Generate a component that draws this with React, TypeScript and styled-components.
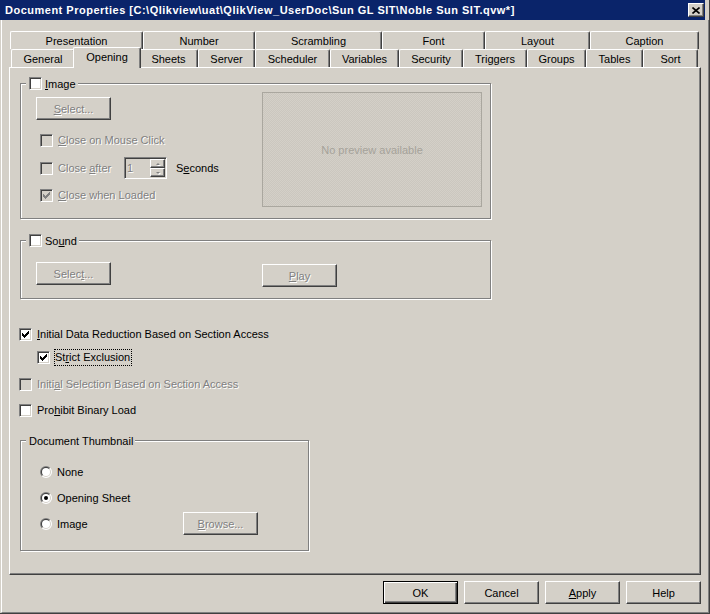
import React from 'react';
import styled, { createGlobalStyle, css } from 'styled-components';

const FACE = '#d4d0c8';
const SHADOW = '#808080';
const DARK = '#404040';

const TITLE =
  'Document Properties [C:\\Qlikview\\uat\\QlikView_UserDoc\\Sun GL SIT\\Noble Sun SIT.qvw*]';

const BACK_TABS: [string, number][] = [
  ['Presentation', 133],
  ['Number', 112],
  ['Scrambling', 127],
  ['Font', 103],
  ['Layout', 105],
  ['Caption', 109],
];

const FRONT_TABS: [string, number][] = [
  ['General', 64],
  ['Opening', 64],
  ['Sheets', 59],
  ['Server', 57],
  ['Scheduler', 75],
  ['Variables', 69],
  ['Security', 64],
  ['Triggers', 64],
  ['Groups', 59],
  ['Tables', 57],
  ['Sort', 55],
];

const GlobalStyle = createGlobalStyle`
  html, body {
    margin: 0;
    padding: 0;
    background: ${FACE};
  }
  body {
    font-family: "Liberation Sans", Arial, sans-serif;
    font-size: 11px;
    color: #000;
  }
  * {
    box-sizing: border-box;
  }
`;

const Window = styled.div`
  width: 710px;
  height: 614px;
  background: ${FACE};
  border-right: 1px solid ${DARK};
  border-bottom: 1px solid ${DARK};
  display: flex;
  flex-direction: column;
`;

const TitleBar = styled.div`
  height: 20px;
  flex-shrink: 0;
  margin-right: 4px;
  padding: 0 1px 0 5px;
  background: #0a246a;
  color: #fff;
  font-weight: bold;
  letter-spacing: 0.5px;
  display: flex;
  align-items: center;
`;

const TitleText = styled.span`
  flex: 1;
  white-space: nowrap;
  overflow: hidden;
`;

const CloseBox = styled.div`
  width: 16px;
  height: 14px;
  background: ${FACE};
  border: 1px solid;
  border-color: #fff ${DARK} ${DARK} #fff;
  box-shadow: inset -1px -1px 0 ${SHADOW};
  display: flex;
  align-items: center;
  justify-content: center;
`;

const Body = styled.div`
  flex: 1;
  margin-left: 1px;
  border-left: 1px solid #fff;
  border-right: 1px solid ${SHADOW};
  border-bottom: 1px solid ${SHADOW};
  padding: 11px 7px 0 7px;
  display: flex;
  flex-direction: column;
`;

const TabRow = styled.div<{ $indent: number }>`
  display: flex;
  height: 18px;
  margin-left: ${(p) => p.$indent}px;
`;

const Tab = styled.div<{ $w: number; $active?: boolean }>`
  width: ${(p) => p.$w}px;
  height: 18px;
  flex-shrink: 0;
  background: ${FACE};
  border-top: 1px solid #fff;
  border-left: 1px solid #fff;
  border-right: 1px solid ${DARK};
  border-radius: 2px 2px 0 0;
  box-shadow: inset -1px 0 0 ${SHADOW};
  display: flex;
  align-items: center;
  justify-content: center;
  white-space: nowrap;

  ${(p) =>
    p.$active &&
    css`
      width: ${p.$w + 4}px;
      height: 21px;
      margin: -2px -2px 0;
      padding-bottom: 3px;
      position: relative;
      z-index: 1;
    `}
`;

const Panel = styled.div`
  height: 508px;
  flex-shrink: 0;
  border: 1px solid;
  border-color: #fff ${DARK} ${DARK} #fff;
  box-shadow: inset -1px -1px 0 ${SHADOW};
  padding: 15px 0 0 9px;
  display: flex;
  flex-direction: column;
  align-items: flex-start;
`;

const GroupBox = styled.div<{ $w: number; $h: number; $mt?: number }>`
  position: relative;
  width: ${(p) => p.$w}px;
  height: ${(p) => p.$h}px;
  margin: ${(p) => p.$mt ?? 0}px 0 0 1px;
  border: 1px solid ${SHADOW};
  box-shadow: inset 1px 1px 0 #fff, 1px 1px 0 #fff;
  display: flex;
`;

const GroupTitle = styled.div`
  position: absolute;
  top: -7px;
  left: 5px;
  height: 13px;
  padding: 0 2px 0 3px;
  background: ${FACE};
  display: flex;
  align-items: center;
  gap: 3px;
  white-space: nowrap;
`;

const ImageInner = styled.div`
  display: flex;
  align-items: flex-start;
  padding: 8px 0 0 15px;
`;

const LeftCol = styled.div`
  width: 226px;
  padding-top: 5px;
  display: flex;
  flex-direction: column;
`;

const Preview = styled.div`
  width: 220px;
  height: 115px;
  border: 1px solid #aaa79f;
  background-color: ${FACE};
  background-image: repeating-conic-gradient(#cbc7bf 0 25%, ${FACE} 0 50%);
  background-size: 2px 2px;
  color: #a5a29a;
  display: flex;
  align-items: center;
  justify-content: center;
`;

const SoundInner = styled.div`
  display: flex;
  align-items: flex-start;
  padding: 21px 0 0 15px;
`;

const ThumbInner = styled.div`
  display: flex;
  flex-direction: column;
  padding: 22px 0 0 19px;
`;

const OptionRow = styled.div<{ $mt?: number; $ml?: number; $h?: number }>`
  display: flex;
  align-items: center;
  height: ${(p) => p.$h ?? 18}px;
  margin-top: ${(p) => p.$mt ?? 0}px;
  margin-left: ${(p) => p.$ml ?? 0}px;
`;

const disabledText = css`
  color: ${SHADOW};
  text-shadow: 1px 1px 0 #fff;
`;

const Label = styled.span<{ $disabled?: boolean; $w?: number; $ml?: number }>`
  margin-left: ${(p) => p.$ml ?? 5}px;
  white-space: nowrap;
  ${(p) => p.$w && `width: ${p.$w}px;`}
  ${(p) => p.$disabled && disabledText}
`;

const FocusLabel = styled.span`
  margin-left: 4px;
  height: 17px;
  line-height: 15px;
  padding-right: 1px;
  border: 1px dotted #000;
  white-space: nowrap;
`;

const Box = styled.span<{ $disabled?: boolean }>`
  width: 13px;
  height: 13px;
  flex-shrink: 0;
  display: inline-flex;
  align-items: center;
  justify-content: center;
  background: ${(p) => (p.$disabled ? FACE : '#fff')};
  border: 1px solid;
  border-color: ${SHADOW} #fff #fff ${SHADOW};
  box-shadow: inset 1px 1px 0 ${DARK}, inset -1px -1px 0 ${FACE};
`;

const Button = styled.button<{ $default?: boolean; $mt?: number; $ml?: number }>`
  width: 75px;
  height: 23px;
  flex-shrink: 0;
  margin: ${(p) => p.$mt ?? 0}px 0 0 ${(p) => p.$ml ?? 0}px;
  padding: 0;
  font: inherit;
  color: #000;
  background: ${FACE};
  border: 1px solid;
  border-color: #fff ${DARK} ${DARK} #fff;
  box-shadow: inset -1px -1px 0 ${SHADOW}, inset 1px 1px 0 ${FACE};

  &:disabled {
    ${disabledText}
  }

  ${(p) =>
    p.$default &&
    css`
      border-color: #000;
      box-shadow: inset 1px 1px 0 #fff, inset -1px -1px 0 ${DARK}, inset -2px -2px 0 ${SHADOW};
    `}
`;

const Spinner = styled.div`
  width: 43px;
  height: 22px;
  flex-shrink: 0;
  display: flex;
  background: ${FACE};
  border: 1px solid;
  border-color: ${SHADOW} #fff #fff ${SHADOW};
  box-shadow: inset 1px 1px 0 ${DARK}, inset -1px -1px 0 ${FACE};
  padding: 1px 1px 1px 2px;
`;

const SpinValue = styled.span`
  flex: 1;
  line-height: 18px;
  ${disabledText}
`;

const SpinButtons = styled.div`
  width: 15px;
  display: flex;
  flex-direction: column;
`;

const SpinButton = styled.span<{ $down?: boolean }>`
  height: 9px;
  border: 1px solid;
  border-color: #fff ${DARK} ${DARK} #fff;
  box-shadow: inset -1px -1px 0 ${SHADOW};
  display: flex;
  align-items: center;
  justify-content: center;

  &::after {
    content: '';
    width: 0;
    height: 0;
    border-left: 2px solid transparent;
    border-right: 2px solid transparent;
    ${(p) =>
      p.$down
        ? `border-top: 2px solid ${SHADOW};`
        : `border-bottom: 2px solid ${SHADOW};`}
    filter: drop-shadow(1px 1px 0 #fff);
  }
`;

const ButtonBar = styled.div`
  display: flex;
  justify-content: flex-end;
  gap: 6px;
  margin-top: 6px;
`;

const CHECK_PIXELS: [number, number, number][] = [
  [0, 6, 6],
  [1, 5, 6],
  [2, 0, 0],
  [2, 4, 6],
  [3, 0, 1],
  [3, 3, 5],
  [4, 0, 4],
  [5, 1, 3],
  [6, 2, 2],
];

function CheckBox({ checked, disabled }: { checked?: boolean; disabled?: boolean }) {
  return (
    <Box $disabled={disabled}>
      {checked ? (
        <svg width="7" height="7" viewBox="0 0 7 7" shapeRendering="crispEdges">
          {CHECK_PIXELS.map(([y, x0, x1]) => (
            <rect
              key={`${y}-${x0}`}
              x={x0}
              y={y}
              width={x1 - x0 + 1}
              height={1}
              fill={disabled ? SHADOW : '#000'}
            />
          ))}
        </svg>
      ) : null}
    </Box>
  );
}

// half of a circle cut along the bottom-left / top-right diagonal
function half(r: number, topLeft: boolean) {
  const k = r * Math.SQRT1_2;
  const a = `${6 - k} ${6 + k}`;
  const b = `${6 + k} ${6 - k}`;
  return topLeft ? `M${a} A${r} ${r} 0 0 1 ${b} Z` : `M${b} A${r} ${r} 0 0 1 ${a} Z`;
}

function Radio({ checked }: { checked?: boolean }) {
  return (
    <svg width="12" height="12" viewBox="0 0 12 12" style={{ flexShrink: 0 }}>
      <path d={half(6, true)} fill={SHADOW} />
      <path d={half(6, false)} fill="#fff" />
      <path d={half(5, true)} fill={DARK} />
      <path d={half(5, false)} fill={FACE} />
      <circle cx="6" cy="6" r="4" fill="#fff" />
      {checked ? <circle cx="6" cy="6" r="2" fill="#000" /> : null}
    </svg>
  );
}

export default function App() {
  return (
    <>
      <GlobalStyle />
      <Window>
        <TitleBar>
          <TitleText>{TITLE}</TitleText>
          <CloseBox>
            <svg width="8" height="7" viewBox="0 0 8 7">
              <path d="M0.5 0.5 L7.5 6.5 M7.5 0.5 L0.5 6.5" stroke="#000" strokeWidth="1.6" />
            </svg>
          </CloseBox>
        </TitleBar>

        <Body>
          <TabRow $indent={1}>
            {BACK_TABS.map(([name, w]) => (
              <Tab key={name} $w={w}>
                {name}
              </Tab>
            ))}
          </TabRow>
          <TabRow $indent={2}>
            {FRONT_TABS.map(([name, w]) => (
              <Tab key={name} $w={w} $active={name === 'Opening'}>
                {name}
              </Tab>
            ))}
          </TabRow>

          <Panel>
            <GroupBox $w={471} $h={136}>
              <GroupTitle>
                <CheckBox />
                <span>
                  <u>I</u>mage
                </span>
              </GroupTitle>
              <ImageInner>
                <LeftCol>
                  <Button disabled>
                    <u>S</u>elect...
                  </Button>
                  <OptionRow $mt={11} $ml={4}>
                    <CheckBox disabled />
                    <Label $disabled>
                      <u>C</u>lose on Mouse Click
                    </Label>
                  </OptionRow>
                  <OptionRow $mt={8} $ml={4} $h={22}>
                    <CheckBox disabled />
                    <Label $disabled $w={66}>
                      Close <u>a</u>fter
                    </Label>
                    <Spinner>
                      <SpinValue>1</SpinValue>
                      <SpinButtons>
                        <SpinButton />
                        <SpinButton $down />
                      </SpinButtons>
                    </Spinner>
                    <Label $ml={9}>
                      S<u>e</u>conds
                    </Label>
                  </OptionRow>
                  <OptionRow $mt={7} $ml={4}>
                    <CheckBox disabled checked />
                    <Label $disabled>
                      <u>C</u>lose when Loaded
                    </Label>
                  </OptionRow>
                </LeftCol>
                <Preview>No preview available</Preview>
              </ImageInner>
            </GroupBox>

            <GroupBox $w={471} $h={59} $mt={21}>
              <GroupTitle>
                <CheckBox />
                <span>
                  So<u>u</u>nd
                </span>
              </GroupTitle>
              <SoundInner>
                <Button disabled>
                  Selec<u>t</u>...
                </Button>
                <Button disabled $ml={151} $mt={2}>
                  <u>P</u>lay
                </Button>
              </SoundInner>
            </GroupBox>

            <OptionRow $mt={26}>
              <CheckBox checked />
              <Label>
                <u>I</u>nitial Data Reduction Based on Section Access
              </Label>
            </OptionRow>
            <OptionRow $mt={5} $ml={18}>
              <CheckBox checked />
              <FocusLabel>
                St<u>r</u>ict Exclusion
              </FocusLabel>
            </OptionRow>
            <OptionRow $mt={9}>
              <CheckBox disabled />
              <Label $disabled>
                Initi<u>a</u>l Selection Based on Section Access
              </Label>
            </OptionRow>
            <OptionRow $mt={8}>
              <CheckBox />
              <Label>
                Pro<u>h</u>ibit Binary Load
              </Label>
            </OptionRow>

            <GroupBox $w={289} $h={111} $mt={21}>
              <GroupTitle>Document Thumbnail</GroupTitle>
              <ThumbInner>
                <OptionRow>
                  <Radio />
                  <Label>None</Label>
                </OptionRow>
                <OptionRow $mt={8}>
                  <Radio checked />
                  <Label>Opening Sheet</Label>
                </OptionRow>
                <OptionRow $mt={5} $h={23}>
                  <Radio />
                  <Label $w={126}>Image</Label>
                  <Button disabled>
                    <u>B</u>rowse...
                  </Button>
                </OptionRow>
              </ThumbInner>
            </GroupBox>
          </Panel>

          <ButtonBar>
            <Button $default>OK</Button>
            <Button>Cancel</Button>
            <Button>
              <u>A</u>pply
            </Button>
            <Button>Help</Button>
          </ButtonBar>
        </Body>
      </Window>
    </>
  );
}
